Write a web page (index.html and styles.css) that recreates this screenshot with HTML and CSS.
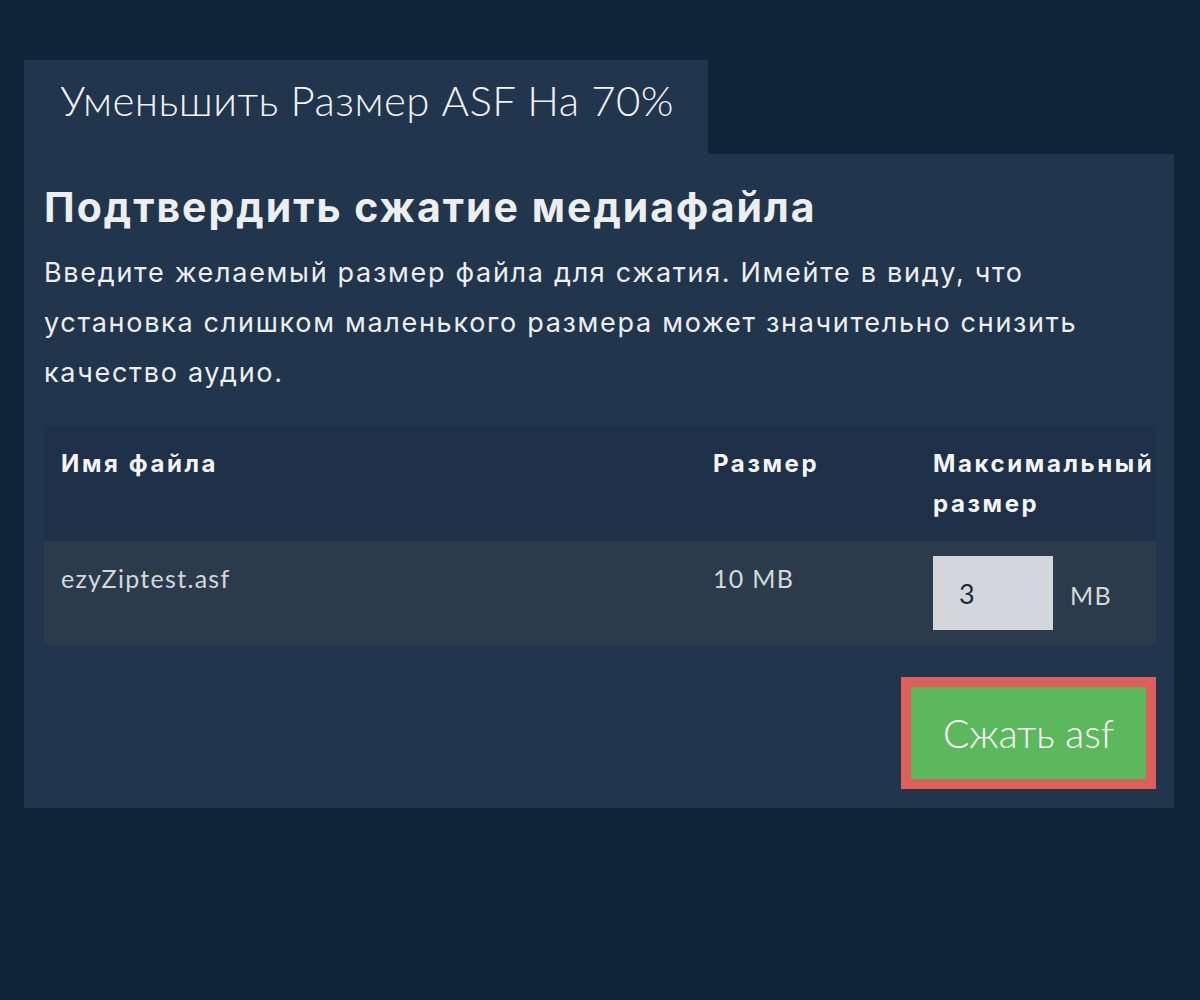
FILE: index.html
```html
<html>

<head>
    <meta http-equiv="Content-Type" content="text/html" charset="utf-8">
    <title>Сжать ASF</title>
    <link rel="stylesheet" href="styles.css">
</head>

<body>
    <div class="wrap">
        <div class="tab">Уменьшить Размер ASF На 70%</div>
        <div class="panel">
            <h2 class="title">Подтвердить сжатие медиафайла</h2>
            <p class="desc">Введите желаемый размер файла для сжатия. Имейте в виду, что установка слишком маленького размера может значительно снизить качество аудио.</p>

            <table class="files">
                <colgroup>
                    <col class="col-name">
                    <col class="col-size">
                    <col class="col-max">
                </colgroup>
                <thead>
                    <tr>
                        <th>Имя файла</th>
                        <th>Размер</th>
                        <th>Максимальный размер</th>
                    </tr>
                </thead>
                <tbody>
                    <tr>
                        <td>ezyZiptest.asf</td>
                        <td>10 MB</td>
                        <td class="cell-max">
                            <div class="max">
                                <input type="text" class="max-input" value="3">
                                <span class="unit">MB</span>
                            </div>
                        </td>
                    </tr>
                </tbody>
            </table>

            <div class="actions">
                <button class="compress">Сжать asf</button>
            </div>
        </div>
    </div>
</body>

</html>
```

FILE: styles.css
```css
body {
    margin: 0;
    background-color: #0f2339;
    font-family: Inter, "Noto Sans", sans-serif;
    color: #eceef0;
}

.wrap {
    width: 1150px;
    padding: 60px 24px;
}

.tab {
    display: inline-block;
    width: 648px;
    height: 94px;
    padding-left: 36px;
    background-color: #21354c;
    font-family: Lato, sans-serif;
    font-size: 42px;
    font-weight: 300;
    line-height: 80px;
    letter-spacing: 0.4px;
    color: #f2f3f5;
}

.panel {
    background-color: #21354c;
    padding: 28px 18px 19px 20px;
}

.title {
    margin: 0;
    font-size: 41px;
    font-weight: bold;
    line-height: 50px;
    letter-spacing: 2px;
}

.desc {
    margin: 16px 0 28px;
    font-size: 27px;
    line-height: 50px;
    letter-spacing: 1.7px;
}

.files {
    width: 100%;
    table-layout: fixed;
    border-collapse: collapse;
}

.col-name {
    width: 652px;
}

.col-size {
    width: 220px;
}

.files th {
    text-align: left;
    vertical-align: top;
    background-color: #1e3148;
    padding: 18px 0 17px 17px;
    font-size: 24px;
    line-height: 40px;
    letter-spacing: 2.6px;
    color: #f4f5f6;
}

.files td {
    vertical-align: top;
    background-color: #2c3b4c;
    color: #d3d8dd;
    padding: 22px 0 15px 17px;
    font-family: Lato, sans-serif;
    font-size: 25px;
    line-height: 30px;
    letter-spacing: 1.3px;
}

.files td.cell-max {
    padding-top: 15px;
}

.max {
    display: flex;
    align-items: center;
    gap: 17px;
}

.max-input {
    width: 120px;
    height: 74px;
    box-sizing: border-box;
    border: 0;
    padding: 0 26px;
    background-color: #d3d7db;
    color: #1c2a3a;
    font-family: Lato, sans-serif;
    font-size: 27px;
}

.unit {
    margin-top: 4px;
}

.actions {
    display: flex;
    justify-content: flex-end;
    margin-top: 32px;
}

.compress {
    width: 255px;
    height: 112px;
    background-color: #5cb85c;
    border: 10px solid #dc5f5c;
    color: #ffffff;
    font-family: Lato, sans-serif;
    font-size: 39px;
    font-weight: 300;
    cursor: pointer;
}
```
